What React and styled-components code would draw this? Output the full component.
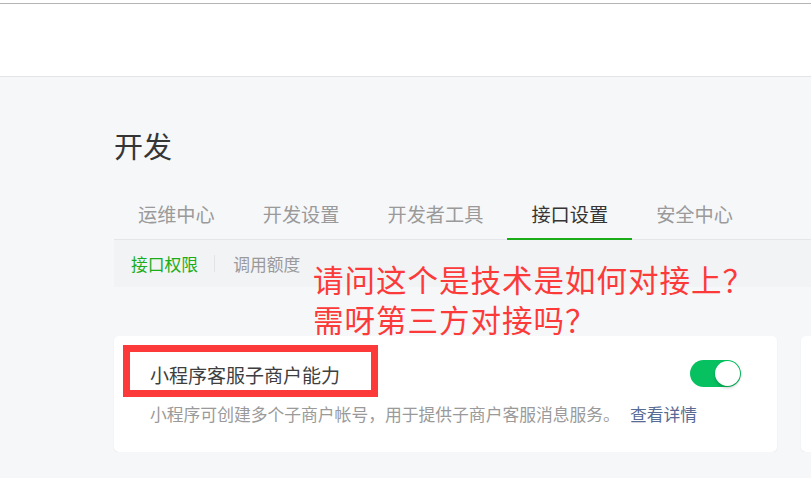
import React from "react";
import styled, { createGlobalStyle } from "styled-components";

const tabs = ["运维中心", "开发设置", "开发者工具", "接口设置", "安全中心"];
const subTabs = ["接口权限", "调用额度"];

const App = () => {
  return (
    <>
      <GlobalStyle />
      <TopBar>
        <TopLine />
      </TopBar>
      <Main>
        <Title>开发</Title>
        <Tabs>
          {tabs.map((t) => (
            <Tab key={t} active={t === "接口设置"}>
              {t}
            </Tab>
          ))}
        </Tabs>
        <SubBar>
          {subTabs.map((t, i) => (
            <React.Fragment key={t}>
              {i > 0 && <SubDivider />}
              <SubTab active={i === 0}>{t}</SubTab>
            </React.Fragment>
          ))}
        </SubBar>
        <Cards>
          <Card>
            <CardHead>
              <CardTitle>小程序客服子商户能力</CardTitle>
              <Switch on>
                <Knob />
              </Switch>
            </CardHead>
            <CardDesc>
              小程序可创建多个子商户帐号，用于提供子商户客服消息服务。
              <Link>查看详情</Link>
            </CardDesc>
            <Mark />
          </Card>
          <Card />
        </Cards>
        <Note>
          请问这个是技术是如何对接上？
          <br />
          需呀第三方对接吗？
        </Note>
      </Main>
    </>
  );
};

// Styled Components
const GlobalStyle = createGlobalStyle`
  html, body {
    margin: 0;
    padding: 0;
    background: #f6f7f9;
    overflow: hidden;
    font-family: "Noto Sans CJK SC", "Noto Sans", sans-serif;
  }
`;

const TopBar = styled.div`
  height: 77px;
  background: #fff;
  border-bottom: 1px solid #e3e4e6;
  padding-top: 3px;
  box-sizing: border-box;
`;

const TopLine = styled.div`
  height: 1px;
  background: #b4b4b4;
`;

const Main = styled.div`
  position: relative;
  padding: 48px 0 0 114px;
`;

const Title = styled.h1`
  margin: 0;
  font-size: 29px;
  font-weight: 400;
  line-height: 40px;
  color: #353535;
`;

const Tabs = styled.div`
  display: flex;
  margin-top: 24px;
  border-bottom: 1px solid #e4e6e9;
`;

const Tab = styled.div`
  padding: 0 24px;
  height: 50px;
  line-height: 50px;
  font-size: 19.2px;
  color: ${(p) => (p.active ? "#353535" : "#9a9a9a")};
  box-shadow: ${(p) => (p.active ? "inset 0 -2px 0 #1aad19" : "none")};
  margin-bottom: -1px;
  padding-bottom: 1px;
`;

const SubBar = styled.div`
  display: flex;
  align-items: center;
  height: 47px;
  padding-left: 17px;
  background: #f2f3f5;
`;

const SubTab = styled.span`
  font-size: 16.8px;
  line-height: 24px;
  color: ${(p) => (p.active ? "#1aad19" : "#9a9a9a")};
`;

const SubDivider = styled.span`
  width: 1px;
  height: 17px;
  margin: 0 18px 0 16px;
  background: #e2e3e5;
`;

const Cards = styled.div`
  display: flex;
  gap: 24px;
  margin-top: 49px;
`;

const Card = styled.div`
  position: relative;
  flex-shrink: 0;
  width: 663px;
  height: 116px;
  box-sizing: border-box;
  padding: 24px 36px 0;
  background: #fff;
  border-radius: 5px;
  box-shadow: 0 1px 2px rgba(0, 0, 0, 0.06);
`;

const CardHead = styled.div`
  display: flex;
  align-items: center;
  justify-content: space-between;
  height: 27px;
`;

const CardTitle = styled.div`
  font-size: 19px;
  line-height: 27px;
  color: #3e3e3e;
  margin-top: 2px;
`;

const Switch = styled.div`
  position: relative;
  width: 51px;
  height: 27px;
  border-radius: 14px;
  background: ${(p) => (p.on ? "#07c160" : "#e5e5e5")};
`;

const Knob = styled.div`
  position: absolute;
  top: 1px;
  right: 1px;
  width: 25px;
  height: 25px;
  border-radius: 50%;
  background: #fff;
  box-shadow: 0 2px 3px rgba(0, 0, 0, 0.2);
`;

const CardDesc = styled.div`
  margin-top: 15px;
  font-size: 16.8px;
  line-height: 24px;
  color: #9a9a9a;
`;

const Link = styled.a`
  margin-left: 10px;
  color: #576b95;
  text-decoration: none;
`;

const Mark = styled.div`
  position: absolute;
  left: 9px;
  top: 9px;
  width: 255px;
  height: 52px;
  box-sizing: border-box;
  border: 7px solid #fc3a3a;
`;

const Note = styled.div`
  position: absolute;
  left: 313px;
  top: 182px;
  font-size: 30.5px;
  letter-spacing: 1px;
  line-height: 40px;
  color: #fc3a3a;
  white-space: nowrap;
`;

export default App;
